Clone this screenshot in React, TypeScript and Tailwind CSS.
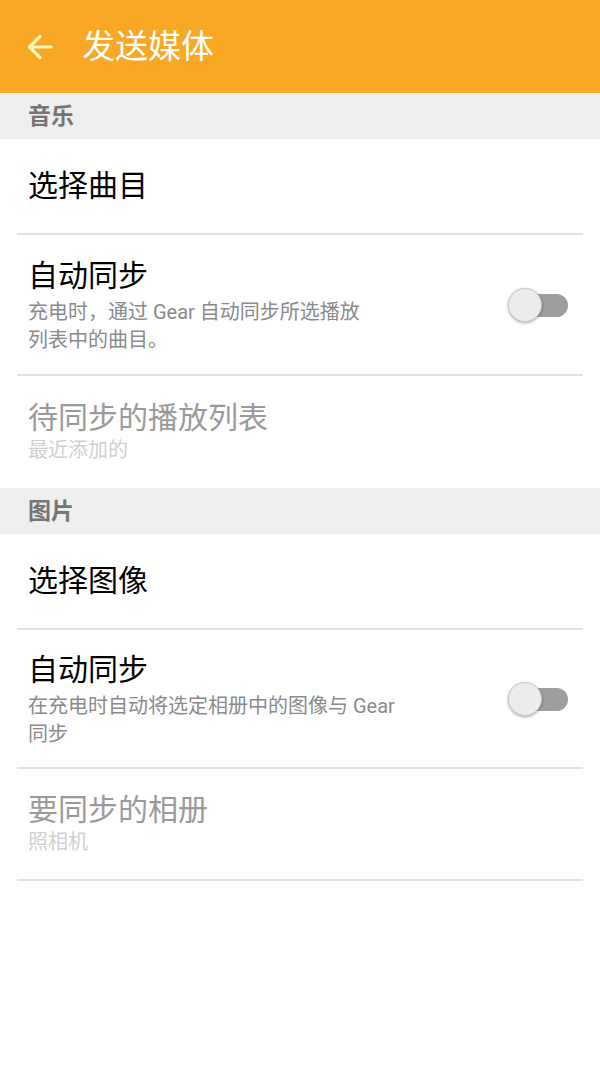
import React from 'react';

const FONT = { fontFamily: 'Roboto, "Noto Sans CJK SC", sans-serif' };

function SectionHeader({ label }: { label: string }) {
  return (
    <div className="h-[46px] bg-[#eeeeee] flex items-center px-[28px]">
      <span className="text-[23px] font-bold text-[#757575] leading-none">{label}</span>
    </div>
  );
}

function Toggle() {
  return (
    <div className="relative w-[64px] h-[36px] shrink-0">
      <div className="absolute left-[10px] right-[2px] top-[7px] h-[23px] rounded-full bg-[#9e9e9e]" />
      <div className="absolute left-[2px] top-[1px] w-[34px] h-[34px] rounded-full bg-[#ececec] border border-[#c8c8c8] shadow-[0_1px_3px_rgba(0,0,0,0.35)]" />
    </div>
  );
}

function Divider() {
  return <div className="mx-[17px] h-[2px] bg-[#e0e0e0]" />;
}

export default function App() {
  return (
    <div className="w-[600px] h-[1066px] bg-white" style={FONT}>
      {/* Action bar */}
      <div className="h-[93px] bg-[#f9a826] flex items-center">
        <svg className="ml-[26px]" width="28" height="28" viewBox="0 0 28 28" fill="none">
          <path d="M25 14H4M14 3.5L3.5 14 14 24.5" stroke="#fff7b8" strokeWidth="3.2" strokeLinecap="round" strokeLinejoin="round" />
        </svg>
        <span className="ml-[28px] text-[33px] text-white leading-none">发送媒体</span>
      </div>

      <SectionHeader label="音乐" />

      <div className="h-[94px] flex items-center px-[28px]">
        <span className="text-[30px] text-black leading-none">选择曲目</span>
      </div>
      <Divider />

      <div className="h-[139px] flex items-center pl-[28px] pr-[30px]">
        <div className="flex-1 pt-[2px]">
          <div className="text-[30px] text-black leading-[36px]">自动同步</div>
          <div className="mt-[4px] text-[20px] text-[#8a8a8a] leading-[28px]">
            充电时，通过 Gear 自动同步所选播放
            <br />
            列表中的曲目。
          </div>
        </div>
        <Toggle />
      </div>
      <Divider />

      <div className="h-[112px] flex flex-col justify-center px-[28px]">
        <div className="text-[30px] text-[#9a9a9a] leading-[36px]">待同步的播放列表</div>
        <div className="text-[20px] text-[#cfcfcf] leading-[28px]">最近添加的</div>
      </div>

      <SectionHeader label="图片" />

      <div className="h-[94px] flex items-center px-[28px]">
        <span className="text-[30px] text-black leading-none">选择图像</span>
      </div>
      <Divider />

      <div className="h-[137px] flex items-center pl-[28px] pr-[30px]">
        <div className="flex-1 pt-[2px]">
          <div className="text-[30px] text-black leading-[36px]">自动同步</div>
          <div className="mt-[4px] text-[20px] text-[#8a8a8a] leading-[28px]">
            在充电时自动将选定相册中的图像与 Gear
            <br />
            同步
          </div>
        </div>
        <Toggle />
      </div>
      <Divider />

      <div className="h-[110px] flex flex-col justify-center px-[28px]">
        <div className="text-[30px] text-[#9a9a9a] leading-[36px]">要同步的相册</div>
        <div className="text-[20px] text-[#cfcfcf] leading-[28px]">照相机</div>
      </div>
      <Divider />
    </div>
  );
}
